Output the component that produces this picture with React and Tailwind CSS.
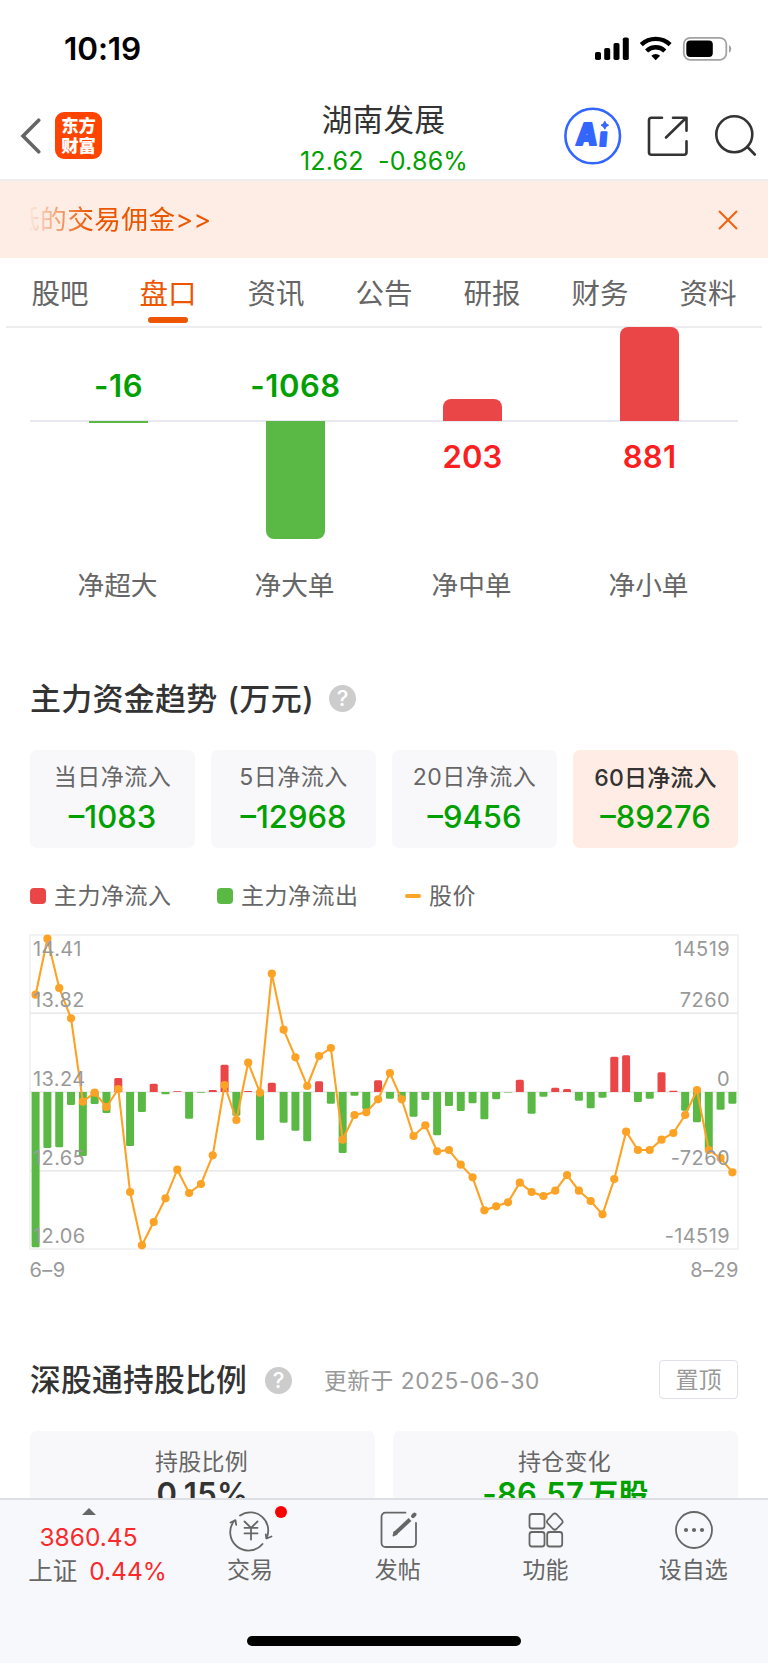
import React from "react";

const TABS = ["股吧", "盘口", "资讯", "公告", "研报", "财务", "资料"];

const ORDERS = [
  { label: "净超大", value: "-16", height: 2, up: false },
  { label: "净大单", value: "-1068", height: 118, up: false },
  { label: "净中单", value: "203", height: 22.5, up: true },
  { label: "净小单", value: "881", height: 94, up: true },
];

const PERIODS = [
  { label: "当日净流入", value: "–1083" },
  { label: "5日净流入", value: "–12968" },
  { label: "20日净流入", value: "–9456" },
  { label: "60日净流入", value: "–89276", active: true },
];

/* Chart data in thirds of a pixel, measured down from 14 px above the plot frame. */
const PRICE = [
  224, 56, 204, 295, 545, 518, 561, 507, 816, 976, 906, 835, 749, 819, 792, 706, 495, 600, 428, 518,
  161, 329, 412, 498, 408, 384, 659, 585, 577, 538, 459, 538, 648, 616, 694, 690, 734, 772, 871, 859,
  847, 788, 816, 828, 812, 765, 812, 843, 883, 777, 635, 690, 690, 659, 639, 585, 510, 690, 714, 757,
];
const FLOW = [
  982, 684, 682, 555, 708, 552, 579, 474, 678, 576, 491, 523, 514, 596, 518, 510, 434, 587, 513, 661,
  488, 608, 632, 664, 484, 551, 699, 527, 568, 481, 536, 540, 590, 540, 646, 558, 573, 550, 598, 538,
  517.5, 479, 581, 530, 503, 507, 542, 565, 533, 410, 406, 546, 536, 457, 512, 572, 607, 690, 569, 551,
];
const BASE = 516;
const px = (i) => 35.6 + i * 11.81;

function StatusBar() {
  return (
    <div className="flex h-[91px] items-start justify-between pl-[64px] pr-[35px] pt-[30px]">
      <span className="text-[31.5px] font-semibold leading-[38px] tracking-[-0.1px] text-black">10:19</span>
      <svg className="mt-[5px]" width="139" height="28" viewBox="594 35 139 28">
        <rect x="595" y="52" width="6" height="8" rx="1.8" />
        <rect x="604.2" y="48" width="6" height="12" rx="1.8" />
        <rect x="613.5" y="43" width="6" height="17" rx="1.8" />
        <rect x="622.8" y="37.5" width="6" height="22.5" rx="1.8" />
        <g fill="none" stroke="#000" strokeWidth="4.4">
          <path d="M641.3 44.6a21 21 0 0 1 28.8 0" />
          <path d="M646.6 51a13 13 0 0 1 18.2 0" />
        </g>
        <path d="M651.3 55.8a6.6 6.6 0 0 1 8.8 0l-4.4 4.4z" />
        <rect x="683.8" y="37.8" width="42.5" height="22" rx="6.5" fill="none" stroke="#a3a3a3" strokeWidth="1.8" />
        <rect x="686.3" y="40.6" width="26.5" height="16.5" rx="4" />
        <path d="M729 45.3c2.8 1 3.2 6 0 7.4z" fill="#a3a3a3" />
      </svg>
    </div>
  );
}

function Header() {
  return (
    <header className="grid h-[90px] grid-cols-[1fr_auto_1fr] items-start border-b-2 border-[#ededf0] pl-[20px] pr-[20px]">
      <div className="flex items-center gap-[14px] pt-[21px]">
        <svg width="21" height="38" viewBox="0 0 21 38">
          <path d="M18.7 3.2 3 19l15.7 15.8" fill="none" stroke="#666" strokeWidth="3.6" strokeLinecap="round" />
        </svg>
        <div className="flex h-[47px] w-[47px] flex-col items-center justify-center rounded-[9px] bg-[#ff4400] text-[17.3px] font-black leading-[19.3px] text-white">
          <span>东方</span>
          <span>财富</span>
        </div>
      </div>
      <div className="flex flex-col items-center pt-[8px]">
        <h1 className="-ml-px text-[30.5px] font-normal leading-[41px] tracking-[0.4px] text-[#333]">湖南发展</h1>
        <p className="whitespace-pre pt-px text-[25px] leading-[41px] tracking-[0.2px] text-[#00a000]">12.62  -0.86%</p>
      </div>
      <svg className="-mr-[11px] mt-[15px] justify-self-end" width="196" height="60" viewBox="563 106 196 60" fill="none">
        <circle cx="592.7" cy="136" r="27.3" stroke="#3366ff" strokeWidth="2.6" />
        <g fill="#3366ff" stroke="#3366ff" strokeLinejoin="round">
          <g transform="translate(575.5 145.3) skewX(-5)" fontWeight="900" strokeWidth="2.2">
            <text x="0" y="0" fontSize="30" textLength="21" lengthAdjust="spacingAndGlyphs">A</text>
            <text x="23.5" y="0.5" fontSize="25">ı</text>
          </g>
          <path d="M604.8 121.2q.8 3.2 3.800 4-3 .8-3.800 4-.8-3.200-3.800-4 3-.8 3.800-4z" />
        </g>
        <g stroke="#333" strokeWidth="2.6" strokeLinecap="round" strokeLinejoin="round">
          <path d="M662 117.7h-10.5a2.5 2.5 0 0 0-2.5 2.5v32a2.500 2.500 0 0 0 2.500 2.500h32.500a2.500 2.500 0 0 0 2.500-2.500v-11M673 117.700h13.500v13M686 118l-20 19.500" />
          <circle cx="734.3" cy="134.3" r="18" />
          <path d="m747.5 147 7.3 7.5" />
        </g>
      </svg>
    </header>
  );
}

function Banner() {
  return (
    <div className="flex h-[77px] items-center justify-between bg-[#fdede5] pl-[30px] pr-[30px]">
      <div className="-mt-[2px] flex w-[200px] justify-start overflow-hidden [mask-image:linear-gradient(90deg,rgba(0,0,0,0.05),#000_60px)]">
        <span className="-ml-[17px] whitespace-nowrap text-[26.7px] leading-[40px] tracking-[0.4px] text-[#ec5500]">低的交易佣金&gt;&gt;</span>
      </div>
      <svg width="20" height="20" viewBox="0 0 20 20">
        <path d="m1 1 18 18M19 1 1 19" stroke="#f0600f" strokeWidth="2" />
      </svg>
    </div>
  );
}

function Tabs() {
  return (
    <nav className="mx-[6px] flex h-[70px] border-b-2 border-[#ededf0]">
      {TABS.map((t, i) => (
        <div key={t} className={"flex flex-1 flex-col items-center pt-[16px] " + (i === 1 ? "text-[#ee5500]" : "text-[#666]")}>
          <span className="text-[28.5px] leading-[40px]">{t}</span>
          {i === 1 && <span className="mt-[3px] h-[6px] w-[40px] rounded-full bg-[#ee5500]" />}
        </div>
      ))}
    </nav>
  );
}

function OrderBars() {
  return (
    <section className="mx-[30px] grid h-[291px] grid-cols-4">
      {ORDERS.map((o) => (
        <div key={o.label} className="flex flex-col items-center">
          <div className="flex h-[94px] w-full flex-col items-center justify-end border-b-2 border-[#e8e8f0]">
            {o.up ? (
              <div className="relative -mb-px w-[59px] shrink-0 rounded-t-[8px] bg-[#ea4648]" style={{ height: o.height }} />
            ) : (
              <span className="mb-[14px] text-[31px] font-semibold leading-[40px] tracking-[0.6px] text-[#00a000]">{o.value}</span>
            )}
          </div>
          <div className="h-[143px]">
            {o.up ? (
              <span className="mt-[15px] block text-[31px] font-semibold leading-[40px] tracking-[0.2px] text-[#fa2020]">{o.value}</span>
            ) : (
              <div className={"relative -top-px w-[59px] bg-[#5ab944] " + (o.height > 10 ? "rounded-b-[8px]" : "")} style={{ height: o.height }} />
            )}
          </div>
          <span className="-ml-[2px] text-[26.7px] leading-[40px] text-[#666]">{o.label}</span>
        </div>
      ))}
    </section>
  );
}

function Help() {
  return (
    <span className="flex h-[27px] w-[27px] items-center justify-center rounded-full bg-[#ccc] text-[22px] font-medium leading-[27px] text-white">?</span>
  );
}

function Periods() {
  return (
    <div className="mx-[30px] grid h-[98px] grid-cols-4 gap-[16px]">
      {PERIODS.map((p) => (
        <div key={p.label} className={"flex flex-col items-center rounded-[7px] " + (p.active ? "bg-[#ffece4]" : "bg-[#f8f8fb]")}>
          <span className={"text-[23px] leading-[30px] " + (p.active ? "mt-[13px] font-medium tracking-[0.2px] text-[#333]" : "mt-[12px] mb-px tracking-[0.5px] text-[#666]")}>{p.label}</span>
          <span className="mt-[4px] text-[31px] font-medium leading-[40px] text-[#00a000]">{p.value}</span>
        </div>
      ))}
    </div>
  );
}

function Legend() {
  return (
    <div className="ml-[30px] flex h-[94px] items-center pt-px text-[23px] leading-[30px] tracking-[0.5px] text-[#666]">
      <span className="mr-[8px] h-[16px] w-[16px] rounded-[4px] bg-[#ea4648]" />
      <span className="w-[163px]">主力净流入</span>
      <span className="mr-[8px] h-[16px] w-[16px] rounded-[4px] bg-[#5ab944]" />
      <span className="w-[164px]">主力净流出</span>
      <span className="mr-[8px] h-[4px] w-[16px] rounded-full bg-[#ffa526]" />
      <span>股价</span>
    </div>
  );
}

function TrendChart() {
  const yOf = (v) => 920 + v / 3;
  const left = [["14.41", 956], ["13.82", 1007], ["13.24", 1085.7], ["12.65", 1164.8], ["12.06", 1243]];
  const right = ["14519", "7260", "0", "-7260", "-14519"];
  return (
    <svg className="block" width="768" height="362" viewBox="0 930 768 362">
      <rect x="30" y="935" width="708" height="314" fill="none" stroke="#f2f2f4" strokeWidth="2" />
      {[1013.2, 1092, 1170.7].map((y) => (
        <path key={y} d={`M30 ${y}H738`} stroke="#e8e8ea" strokeWidth="1.5" />
      ))}
      {FLOW.map((v, i) => {
        const up = v < BASE;
        const h = Math.max(Math.abs(v - BASE) / 3, 0.5);
        const r = Math.min(1.5, h / 2);
        const x = px(i) - 4;
        const d = up
          ? `M${x} 1092v${-(h - r)}q0 ${-r} ${r} ${-r}h${8 - 2 * r}q${r} 0 ${r} ${r}v${h - r}z`
          : `M${x} 1092v${h - r}q0 ${r} ${r} ${r}h${8 - 2 * r}q${r} 0 ${r} ${-r}v${-(h - r)}z`;
        return <path key={i} d={d} fill={up ? "#ea4648" : "#5ab944"} />;
      })}
      <polyline points={PRICE.map((v, i) => `${px(i)},${yOf(v)}`).join(" ")} fill="none" stroke="#fca326" strokeWidth="2.1" />
      {PRICE.map((v, i) => (
        <circle key={i} cx={px(i)} cy={yOf(v)} r="4.1" fill="#fca326" />
      ))}
      <g fill="#999" fontSize="20" letterSpacing="0.4">
        {left.map(([t, y]) => (
          <text key={t} x="33" y={y}>{t}</text>
        ))}
        {right.map((t, i) => (
          <text key={t} x="730" y={left[i][1]} textAnchor="end">{t}</text>
        ))}
        <text x="29.5" y="1276.5">6–9</text>
        <text x="738.8" y="1276.5" textAnchor="end">8–29</text>
      </g>
    </svg>
  );
}

function Holdings() {
  return (
    <section className="h-[206px] overflow-hidden px-[30px] pt-[68px]">
      <div className="flex h-[40px] items-center">
        <h2 className="mr-[18px] text-[30.8px] font-medium leading-[40px] tracking-[0.2px] text-[#333]">深股通持股比例</h2>
        <Help />
        <span className="ml-[32px] pt-px text-[22.7px] leading-[30px] tracking-[0.6px] text-[#999]">更新于 2025-06-30</span>
        <span className="ml-auto -mt-px flex h-[39px] w-[79px] items-center justify-center rounded-[4px] border border-[#e0e0e8] pt-px text-[23px] text-[#999]">置顶</span>
      </div>
      <div className="mt-[31px] grid grid-cols-2 gap-[18px] text-center">
        <div className="h-[100px] rounded-[7px] bg-[#f8f8fb] pt-[16px]">
          <p className="-ml-[2px] text-[23px] leading-[30px] tracking-[0.3px] text-[#666]">持股比例</p>
          <p className="-mt-[3px] text-[31px] font-semibold leading-[40px] tracking-[0.3px] text-[#333]">0.15%</p>
        </div>
        <div className="h-[100px] rounded-[7px] bg-[#f8f8fb] pt-[16px]">
          <p className="-ml-[2px] text-[23px] leading-[30px] tracking-[0.3px] text-[#666]">持仓变化</p>
          <p className="-mt-[3px] text-[31px] font-semibold leading-[40px] tracking-[0.3px] text-[#00a000]">-86.57<span className="ml-[4px] text-[30px]">万股</span></p>
        </div>
      </div>
    </section>
  );
}

const ICONS = {
  trade: (
    <>
      <path d="M11 7.500a18 18 0 0 1 26.500 22.500M33.500 36a18 18 0 0 1-28-23.500" />
      <path d="m1.500 14.500 5-2.200.7 4.500M42.500 28.500l-5 2-.7-4" />
      <path d="m15.500 13.500 6.500 6.300 6.500-6.300M22 19.800v11.700M15.500 19.800h13M15.500 25.400h13" />
    </>
  ),
  post: (
    <>
      <path d="M28.500 4.700H8.500a4 4 0 0 0-4 4V35a4 4 0 0 0 4 4h26.500a4 4 0 0 0 4-4V15" />
      <path d="M17.500 26 33 11.500" strokeWidth="4" strokeLinecap="butt" />
      <path d="m16.500 27.500 1-3.500 2 2z" />
      <path d="m36 8.200 1.500-1.500" strokeWidth="4" />
    </>
  ),
  more: (
    <>
      <rect x="5.5" y="6" width="15" height="14.5" rx="2.5" />
      <rect x="5.5" y="24" width="15" height="14.5" rx="2.5" />
      <rect x="23.2" y="24" width="15" height="14.5" rx="2.5" />
      <path d="M29.100 6.200q1.700-1.500 3.400 0l5.400 5.800q1.500 1.700 0 3.400l-5.400 5.600q-1.700 1.500-3.400 0l-5.400-5.600q-1.500-1.700 0-3.400z" />
    </>
  ),
  watch: (
    <>
      <circle cx="22" cy="22" r="18" />
      <g fill="#666" stroke="none">
        <circle cx="14" cy="22" r="2.1" />
        <circle cx="22" cy="22" r="2.1" />
        <circle cx="30" cy="22" r="2.1" />
      </g>
    </>
  ),
};

function BottomItem({ icon, label, dot }) {
  return (
    <div className="flex flex-1 flex-col items-center pt-[8px]">
      <div className="relative h-[44px] w-[44px]">
        <svg width="44" height="44" viewBox="0 0 44 44" fill="none" stroke="#666" strokeWidth="1.8" strokeLinecap="round" strokeLinejoin="round">
          {ICONS[icon]}
        </svg>
        {dot && <span className="absolute -right-[14px] -top-[2px] h-[12px] w-[12px] rounded-full bg-[#fa0000]" />}
      </div>
      <span className="-ml-[2px] mt-[3px] text-[23px] leading-[30px] text-[#666]">{label}</span>
    </div>
  );
}

function BottomBar() {
  return (
    <footer className="h-[165px] border-t-2 border-[#dedee5] bg-[#f7f8fb]">
      <div className="flex h-[136px]">
        <div className="flex w-[177px] flex-col items-center pt-[8px]">
          <svg width="14" height="7" viewBox="0 0 14 7">
            <path d="M7 0l7 7H0z" fill="#666" />
          </svg>
          <span className="mt-[4px] text-[24.5px] leading-[36px] text-[#fa2a2a]">3860.45</span>
          <span className="ml-[18px] whitespace-nowrap text-[24.5px] leading-[33px] text-[#fa2a2a]">
            <span className="mr-[12px]  text-[#666]">上证</span>0.44%
          </span>
        </div>
        <BottomItem icon="trade" label="交易" dot />
        <BottomItem icon="post" label="发帖" />
        <BottomItem icon="more" label="功能" />
        <BottomItem icon="watch" label="设自选" />
      </div>
      <div className="mx-auto h-[10px] w-[274px] rounded-full bg-black" />
    </footer>
  );
}

export default function App() {
  return (
    <div className="h-[1663px] w-[768px] overflow-hidden bg-white font-['Inter','Noto_Sans_CJK_SC',sans-serif]">
      <StatusBar />
      <Header />
      <Banner />
      <Tabs />
      <OrderBars />
      <div className="flex h-[131px] items-start gap-[15px] pl-[30px] pt-[60px]">
        <h2 className="text-[31px] font-medium leading-[40px] tracking-[0.25px] text-[#333]">主力资金趋势<span className="ml-[10px] tracking-[0.4px]">(万元)</span></h2>
        <div className="pt-[6px]"><Help /></div>
      </div>
      <Periods />
      <Legend />
      <div className="-mt-[12px]"><TrendChart /></div>
      <Holdings />
      <BottomBar />
    </div>
  );
}
